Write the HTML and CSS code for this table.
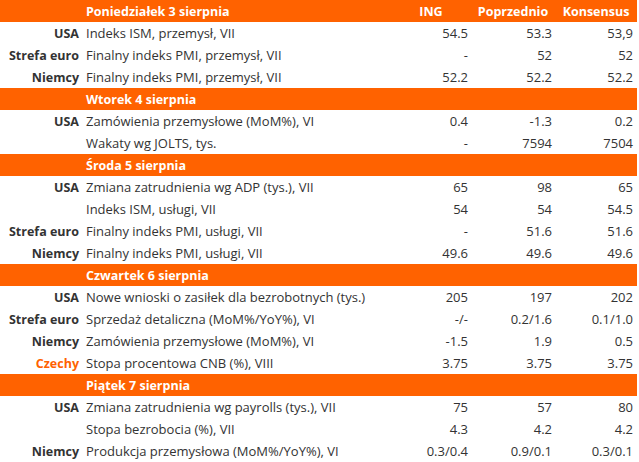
FILE: index.html
```html
<!DOCTYPE html>
<html lang="pl">
<head>
<meta charset="utf-8">
<link rel="stylesheet" href="styles.css">
</head>
<body>
<div class="cal">
  <div class="row head first"><span class="c lbl"></span><span class="c desc">Poniedziałek 3 sierpnia</span><span class="c hcol">ING</span><span class="c hcol">Poprzednio</span><span class="c hcol">Konsensus</span></div>
  <div class="row"><span class="c lbl">USA</span><span class="c desc">Indeks ISM, przemysł, VII</span><span class="c num">54.5</span><span class="c num">53.3</span><span class="c num">53,9</span></div>
  <div class="row"><span class="c lbl">Strefa euro</span><span class="c desc">Finalny indeks PMI, przemysł, VII</span><span class="c num">-</span><span class="c num">52</span><span class="c num">52</span></div>
  <div class="row"><span class="c lbl">Niemcy</span><span class="c desc">Finalny indeks PMI, przemysł, VII</span><span class="c num">52.2</span><span class="c num">52.2</span><span class="c num">52.2</span></div>

  <div class="row head"><span class="c lbl"></span><span class="c desc">Wtorek 4 sierpnia</span><span class="c hcol"></span><span class="c hcol"></span><span class="c hcol"></span></div>
  <div class="row"><span class="c lbl">USA</span><span class="c desc">Zamówienia przemysłowe (MoM%), VI</span><span class="c num">0.4</span><span class="c num">-1.3</span><span class="c num">0.2</span></div>
  <div class="row"><span class="c lbl"></span><span class="c desc">Wakaty wg JOLTS, tys.</span><span class="c num">-</span><span class="c num">7594</span><span class="c num">7504</span></div>

  <div class="row head"><span class="c lbl"></span><span class="c desc">Środa 5 sierpnia</span><span class="c hcol"></span><span class="c hcol"></span><span class="c hcol"></span></div>
  <div class="row"><span class="c lbl">USA</span><span class="c desc">Zmiana zatrudnienia wg ADP (tys.), VII</span><span class="c num">65</span><span class="c num">98</span><span class="c num">65</span></div>
  <div class="row"><span class="c lbl"></span><span class="c desc">Indeks ISM, usługi, VII</span><span class="c num">54</span><span class="c num">54</span><span class="c num">54.5</span></div>
  <div class="row"><span class="c lbl">Strefa euro</span><span class="c desc">Finalny indeks PMI, usługi, VII</span><span class="c num">-</span><span class="c num">51.6</span><span class="c num">51.6</span></div>
  <div class="row"><span class="c lbl">Niemcy</span><span class="c desc">Finalny indeks PMI, usługi, VII</span><span class="c num">49.6</span><span class="c num">49.6</span><span class="c num">49.6</span></div>

  <div class="row head"><span class="c lbl"></span><span class="c desc">Czwartek 6 sierpnia</span><span class="c hcol"></span><span class="c hcol"></span><span class="c hcol"></span></div>
  <div class="row"><span class="c lbl">USA</span><span class="c desc">Nowe wnioski o zasiłek dla bezrobotnych (tys.)</span><span class="c num">205</span><span class="c num">197</span><span class="c num">202</span></div>
  <div class="row"><span class="c lbl">Strefa euro</span><span class="c desc">Sprzedaż detaliczna (MoM%/YoY%), VI</span><span class="c num">-/-</span><span class="c num">0.2/1.6</span><span class="c num">0.1/1.0</span></div>
  <div class="row"><span class="c lbl">Niemcy</span><span class="c desc">Zamówienia przemysłowe (MoM%), VI</span><span class="c num">-1.5</span><span class="c num">1.9</span><span class="c num">0.5</span></div>
  <div class="row"><span class="c lbl hl">Czechy</span><span class="c desc">Stopa procentowa CNB (%), VIII</span><span class="c num">3.75</span><span class="c num">3.75</span><span class="c num">3.75</span></div>

  <div class="row head"><span class="c lbl"></span><span class="c desc">Piątek 7 sierpnia</span><span class="c hcol"></span><span class="c hcol"></span><span class="c hcol"></span></div>
  <div class="row"><span class="c lbl">USA</span><span class="c desc">Zmiana zatrudnienia wg payrolls (tys.), VII</span><span class="c num">75</span><span class="c num">57</span><span class="c num">80</span></div>
  <div class="row"><span class="c lbl"></span><span class="c desc">Stopa bezrobocia (%), VII</span><span class="c num">4.3</span><span class="c num">4.2</span><span class="c num">4.2</span></div>
  <div class="row"><span class="c lbl">Niemcy</span><span class="c desc">Produkcja przemysłowa (MoM%/YoY%), VI</span><span class="c num">0.3/0.4</span><span class="c num">0.9/0.1</span><span class="c num">0.3/0.1</span></div>
</div>
</body>
</html>
```
FILE: styles.css
```css
html, body {
  margin: 0;
  padding: 0;
  background: #ffffff;
}
.cal {
  width: 637px;
  font-family: "Open Sans", "Noto Sans", sans-serif;
  font-size: 13px;
  color: #333333;
}
.row {
  display: grid;
  grid-template-columns: 82px 309px 80px 84px 82px;
  height: 22px;
  align-items: center;
}
.row.head {
  background: #ff6200;
  color: #ffffff;
  font-weight: 700;
  font-size: 12.5px;
}
.c {
  white-space: nowrap;
  overflow: visible;
}
.lbl {
  text-align: right;
  padding-right: 3px;
  font-weight: 700;
  font-size: 12.5px;
}
.lbl.hl {
  color: #ff6200;
}
.desc {
  padding-left: 4px;
}
.hcol {
  text-align: center;
}
.num {
  text-align: right;
  padding-right: 3px;
}
.num:last-child {
  padding-right: 4px;
}
```
